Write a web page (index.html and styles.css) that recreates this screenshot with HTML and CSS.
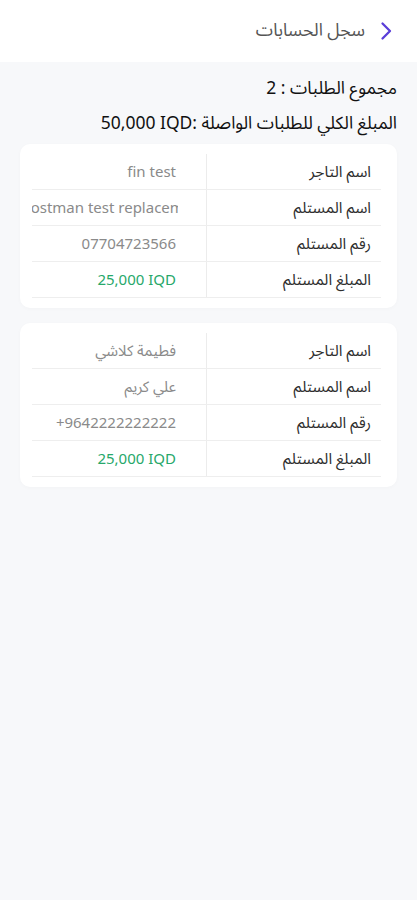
FILE: index.html
```html
<!DOCTYPE html>
<html lang="ar" dir="rtl">
<head>
<meta charset="utf-8">
<title>سجل الحسابات</title>
<link rel="stylesheet" href="styles.css">
</head>
<body>
<header class="topbar">
  <span class="back">
    <svg width="14" height="20" viewBox="0 0 14 20"><path d="M3.5 2.5 L11 10 L3.5 17.5" fill="none" stroke="#5a3ed8" stroke-width="2.3" stroke-linecap="round" stroke-linejoin="round"/></svg>
  </span>
  <h1 class="title">سجل الحسابات</h1>
</header>
<main class="content">
  <p class="summary">مجموع الطلبات : 2</p>
  <p class="summary">المبلغ الكلي للطلبات الواصلة :<span class="ltr">50,000 IQD</span></p>

  <section class="card">
    <div class="row"><div class="label">اسم التاجر</div><div class="value"><div class="clip"><span class="ltr">fin test</span></div></div></div>
    <div class="row"><div class="label">اسم المستلم</div><div class="value"><div class="clip"><span class="ltr shift">postman test replacement</span></div></div></div>
    <div class="row"><div class="label">رقم المستلم</div><div class="value"><div class="clip"><span class="ltr">07704723566</span></div></div></div>
    <div class="row"><div class="label">المبلغ المستلم</div><div class="value green"><div class="clip"><span class="ltr">25,000 IQD</span></div></div></div>
  </section>

  <section class="card">
    <div class="row"><div class="label">اسم التاجر</div><div class="value"><div class="clip"><span>فطيمة كلاشي</span></div></div></div>
    <div class="row"><div class="label">اسم المستلم</div><div class="value"><div class="clip"><span>علي كريم</span></div></div></div>
    <div class="row"><div class="label">رقم المستلم</div><div class="value"><div class="clip"><span class="ltr">+9642222222222</span></div></div></div>
    <div class="row"><div class="label">المبلغ المستلم</div><div class="value green"><div class="clip"><span class="ltr">25,000 IQD</span></div></div></div>
  </section>
</main>
</body>
</html>
```
FILE: styles.css
```css
* { box-sizing: border-box; }
html, body { margin: 0; padding: 0; }
body {
  direction: rtl;
  font-family: "Noto Sans Arabic", "Open Sans", "DejaVu Sans", sans-serif;
  background: #f7f8fa;
  color: #1a1a1a;
  min-height: 900px;
}
.topbar {
  height: 62px;
  background: #ffffff;
  display: flex;
  align-items: center;
  padding: 0 24px 0 0;
  gap: 14px;
}
.back { display: flex; align-items: center; width: 14px; height: 20px; }
.title {
  margin: 0;
  font-size: 17.5px;
  font-weight: 400;
  color: #555555;
  padding-bottom: 2px;
}
.content { padding: 9px 20px 0 20px; }
.summary {
  margin: 0;
  font-size: 17.5px;
  line-height: 35px;
  color: #111;
}
.ltr { direction: ltr; unicode-bidi: isolate; }
.card {
  background: #ffffff;
  border-radius: 10px;
  box-shadow: 0 1px 4px rgba(0, 0, 0, 0.025);
  padding: 10px 16px 10px 12px;
  margin-top: 3px;
  margin-bottom: 15px;
}
.card + .card { margin-top: 0; }
.row {
  display: grid;
  grid-template-columns: 175px 1fr;
  height: 36px;
  border-bottom: 1px solid #eeeeee;
}
.label {
  display: flex;
  align-items: center;
  padding-right: 10px;
  font-size: 15.5px;
  color: #2e2e2e;
  border-left: 1px solid #ececec;
}
.value {
  display: flex;
  align-items: center;
  padding-right: 28px;
  min-width: 0;
  font-size: 15px;
  color: #8a8a8a;
}
.clip {
  flex: 1;
  min-width: 0;
  display: flex;
  overflow: hidden;
  white-space: nowrap;
  padding-right: 2px;
}
.clip span { flex: none; }
.clip .shift { margin-right: -31px; }
.green { color: #27a86a; }
```
